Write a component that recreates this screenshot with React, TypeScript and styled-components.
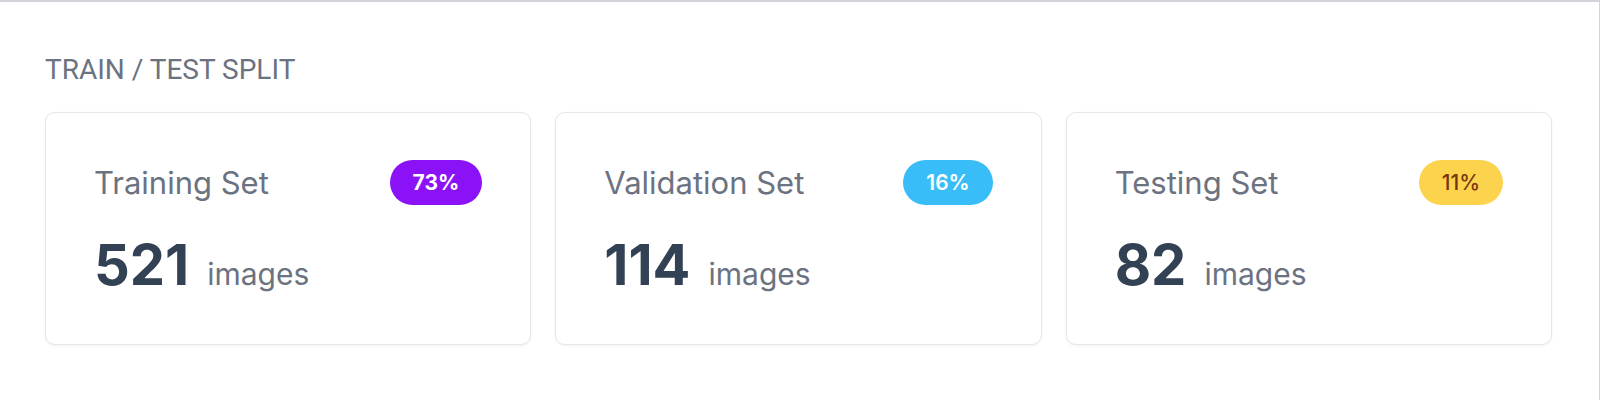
import React from "react";
import styled, { createGlobalStyle } from "styled-components";

const Global = createGlobalStyle`
  html, body { margin: 0; padding: 0; background: #ffffff; }
  body { font-family: Inter, "Noto Sans", sans-serif; }
`;

const Frame = styled.div`
  box-sizing: border-box;
  width: 1600px;
  height: 400px;
  border-top: 2px solid #d1d5db;
  border-right: 1px solid #d1d5db;
  padding: 51px 47px 0 45px;
  background: #ffffff;
`;

const Heading = styled.h2`
  margin: 0 0 26px 0;
  font-family: Roboto, "Liberation Sans", sans-serif;
  font-size: 28px;
  font-weight: 400;
  line-height: 33px;
  color: #6b7280;
  text-transform: uppercase;
`;

const Grid = styled.div`
  display: grid;
  grid-template-columns: repeat(3, 1fr);
  gap: 24px;
`;

const Card = styled.div`
  box-sizing: border-box;
  height: 233px;
  padding: 47px 48px 48px 48px;
  border: 1px solid #e5e7eb;
  border-radius: 10px;
  background: #ffffff;
  box-shadow: 0 1px 3px rgba(0, 0, 0, 0.06);
  display: flex;
  flex-direction: column;
  gap: 32px;
`;

const Row = styled.div`
  display: flex;
  align-items: center;
  justify-content: space-between;
`;

const Title = styled.span`
  font-size: 31px;
  font-weight: 400;
  color: #6b7280;
  line-height: 36px;
`;

const Badge = styled.span<{ $bg: string; $fg: string; $weight: number }>`
  box-sizing: border-box;
  height: 45px;
  padding: 0 23px;
  border-radius: 999px;
  display: inline-flex;
  align-items: center;
  background: ${(p) => p.$bg};
  color: ${(p) => p.$fg};
  font-size: 21px;
  font-weight: ${(p) => p.$weight};
`;

const Count = styled.div`
  display: flex;
  align-items: baseline;
  gap: 18px;
`;

const Number = styled.span`
  font-size: 56px;
  font-weight: 700;
  line-height: 56px;
  color: #334155;
`;

const Unit = styled.span`
  font-size: 30px;
  font-weight: 400;
  color: #6b7280;
`;

const sets = [
  { title: "Training Set", pct: "73%", count: 521, bg: "#8b12f7", fg: "#ffffff", w: 700 },
  { title: "Validation Set", pct: "16%", count: 114, bg: "#38bdf8", fg: "#ffffff", w: 600 },
  { title: "Testing Set", pct: "11%", count: 82, bg: "#fcd34d", fg: "#78350f", w: 500 },
];

export default function App() {
  return (
    <>
      <Global />
      <Frame>
        <Heading>Train / Test Split</Heading>
        <Grid>
          {sets.map((s) => (
            <Card key={s.title}>
              <Row>
                <Title>{s.title}</Title>
                <Badge $bg={s.bg} $fg={s.fg} $weight={s.w}>
                  {s.pct}
                </Badge>
              </Row>
              <Count>
                <Number>{s.count}</Number>
                <Unit>images</Unit>
              </Count>
            </Card>
          ))}
        </Grid>
      </Frame>
    </>
  );
}
